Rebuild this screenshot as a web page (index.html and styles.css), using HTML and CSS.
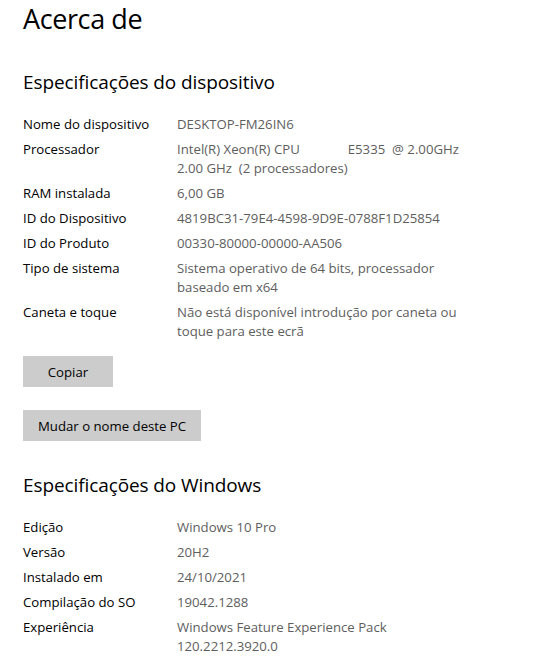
FILE: index.html
```html
<!DOCTYPE html>
<html lang="pt">
<head>
<meta charset="utf-8">
<title>Acerca de</title>
<link rel="stylesheet" href="styles.css">
</head>
<body>
<main class="page">
  <h1 class="title">Acerca de</h1>

  <h2 class="section-title first">Especificações do dispositivo</h2>
  <dl class="specs">
    <dt>Nome do dispositivo</dt><dd>DESKTOP-FM26IN6</dd>
    <dt>Processador</dt><dd>Intel(R) Xeon(R) CPU&nbsp;&nbsp;&nbsp;&nbsp;&nbsp;&nbsp;&nbsp;&nbsp;&nbsp;&nbsp;&nbsp;&nbsp;&nbsp;&nbsp;E5335&nbsp; @ 2.00GHz<br>2.00 GHz&nbsp; (2 processadores)</dd>
    <dt>RAM instalada</dt><dd>6,00 GB</dd>
    <dt>ID do Dispositivo</dt><dd>4819BC31-79E4-4598-9D9E-0788F1D25854</dd>
    <dt>ID do Produto</dt><dd>00330-80000-00000-AA506</dd>
    <dt>Tipo de sistema</dt><dd>Sistema operativo de 64 bits, processador<br>baseado em x64</dd>
    <dt>Caneta e toque</dt><dd>Não está disponível introdução por caneta ou<br>toque para este ecrã</dd>
  </dl>

  <div class="actions">
    <button class="btn btn-copy" type="button">Copiar</button>
    <button class="btn" type="button">Mudar o nome deste PC</button>
  </div>

  <h2 class="section-title">Especificações do Windows</h2>
  <dl class="specs specs-windows">
    <dt>Edição</dt><dd>Windows 10 Pro</dd>
    <dt>Versão</dt><dd>20H2</dd>
    <dt>Instalado em</dt><dd>24/10/2021</dd>
    <dt>Compilação do SO</dt><dd>19042.1288</dd>
    <dt>Experiência</dt><dd>Windows Feature Experience Pack<br>120.2212.3920.0</dd>
  </dl>
</main>
</body>
</html>
```
FILE: styles.css
```css
html, body {
  margin: 0;
  padding: 0;
  background: #ffffff;
}

body {
  font-family: "Open Sans", "Noto Sans", "Liberation Sans", sans-serif;
  color: #000000;
  overflow: hidden;
}

.page {
  padding: 0 0 0 23px;
}

.title {
  margin: 0;
  font-size: 27px;
  font-weight: 400;
  line-height: 38px;
  letter-spacing: -0.4px;
}

.section-title {
  margin: 30px 0 0 0;
  font-size: 19px;
  font-weight: 400;
  line-height: 28px;
  letter-spacing: -0.1px;
}

.specs {
  display: grid;
  grid-template-columns: 154px 1fr;
  row-gap: 6px;
  margin: 19px 0 0 0;
  font-size: 13.2px;
  line-height: 19px;
}

.specs-windows {
  margin-top: 19px;
}

.specs dt {
  margin: 0;
  color: #000000;
}

.specs dd {
  margin: 0;
  color: #5e5e5e;
}

.actions {
  display: flex;
  flex-direction: column;
  align-items: flex-start;
  gap: 23px;
  margin-top: 15px;
}

.btn {
  font-family: inherit;
  font-size: 13.2px;
  color: #000000;
  background: #cccccc;
  border: none;
  border-radius: 0;
  height: 31px;
  padding: 0 15px;
}

.btn-copy {
  width: 90px;
}
```
